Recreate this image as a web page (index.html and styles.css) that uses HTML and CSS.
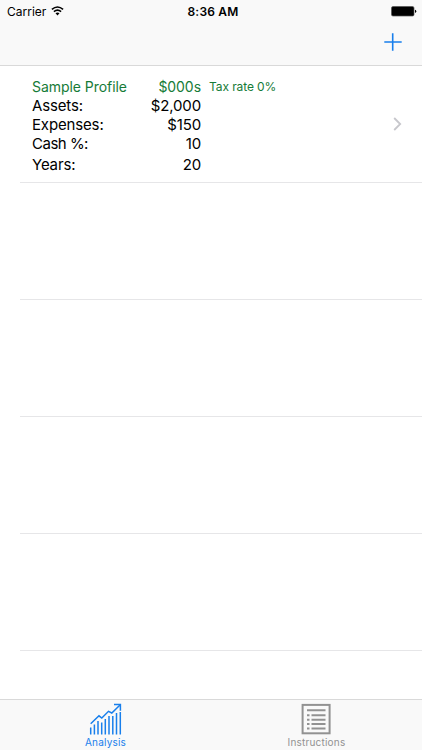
FILE: index.html
```html
<!DOCTYPE html>
<html>
<head>
  <meta charset="utf-8">
  <meta name="viewport" content="width=device-width, initial-scale=1">
  <title>Analysis</title>
  <link rel="stylesheet" href="styles.css">
</head>
<body>
  <header>
    <div class="status-bar">
      <div class="carrier">
        <span>Carrier</span>
        <svg width="13" height="10" viewBox="0 0 13 10">
          <path d="M0.9 3.4Q6.5 -1.4 12.1 3.4M2.9 5.6Q6.5 2.5 10.1 5.6" fill="none" stroke="#000" stroke-width="1.6"/>
          <path d="M4.5 7.3Q6.5 5.8 8.5 7.3L6.5 9.4Z"/>
        </svg>
      </div>
      <div class="time">8:36 AM</div>
      <div class="battery">
        <svg width="26" height="11" viewBox="0 0 26 11">
          <rect x="0.5" y="0.5" width="22.5" height="9.5" rx="1.5" stroke="#555" stroke-width="0.7"/>
          <path d="M24 3.7Q25.3 4 25.3 5.3Q25.3 6.6 24 6.9Z"/>
        </svg>
      </div>
    </div>
    <div class="nav-bar">
      <svg width="18" height="18" viewBox="0 0 18 18">
        <path d="M0.3 9H17.7M8.7 0.3V17.7" stroke="#187fec" stroke-width="1.6"/>
      </svg>
    </div>
  </header>

  <main>
    <div class="row">
      <div class="profile">
        <span class="name green">Sample Profile</span><span class="value name green">$000s</span><span class="tax green">Tax rate 0%</span>
        <span>Assets:</span><span class="value">$2,000</span><span></span>
        <span>Expenses:</span><span class="value">$150</span><span></span>
        <span class="cash">Cash %:</span><span class="value">10</span><span></span>
        <span>Years:</span><span class="value">20</span><span></span>
      </div>
      <svg class="chevron" width="9" height="14" viewBox="0 0 9 14">
        <path d="M1.2 1L7.2 7L1.2 13" fill="none" stroke="#c7c7cc" stroke-width="1.8"/>
      </svg>
    </div>
    <div class="row"></div>
    <div class="row"></div>
    <div class="row"></div>
    <div class="row"></div>
  </main>

  <footer>
    <div class="tab active">
      <svg width="33" height="32" viewBox="0 0 33 32">
        <g fill="none" stroke="currentColor" stroke-width="1.5">
          <path d="M1.7 31.5V24.5M5.4 31.5V21.5M9 31.5V18M12.7 31.5V19.5M16.3 31.5V16M20 31.5V13M23.8 31.5V13M27.5 31.5V10M31.3 31.5V9"/>
          <path d="M1.7 20.8L10 12.8L12.8 15L19.5 8.3L22.8 10L31 2"/>
          <path d="M25 1.4H31.4V7.8"/>
        </g>
      </svg>
      <span>Analysis</span>
    </div>
    <div class="tab">
      <svg width="31" height="32" viewBox="0 0 31 32">
        <rect x="1.6" y="1.9" width="27" height="28.4" fill="none" stroke="currentColor" stroke-width="2"/>
        <path d="M6 7.3H24.5M10.5 12.2H24.5M10.5 16.7H24.5M10.5 21H24.5M10.5 25.5H24.5M6 12.2H8.5M6 16.7H8.5M6 21H8.5M6 25.5H8.5" stroke="currentColor" stroke-width="2"/>
      </svg>
      <span>Instructions</span>
    </div>
  </footer>
</body>
</html>
```
FILE: styles.css
```css
* {
  box-sizing: border-box;
}
body {
  margin: 0;
  height: 750px;
  display: flex;
  flex-direction: column;
  overflow: hidden;
  background: #fff;
  color: #000;
  font-family: Inter, "Liberation Sans", sans-serif;
}
svg {
  display: block;
}
header {
  height: 66px;
  flex: none;
  background: #f9f9f9;
  border-bottom: 1px solid #d9d9d9;
}
.status-bar {
  height: 22px;
  display: grid;
  grid-template-columns: 1fr auto 1fr;
  align-items: center;
  padding: 0 5px 0 7px;
  font-size: 12px;
}
.carrier {
  display: flex;
  align-items: center;
  gap: 5px;
}
.time {
  font-weight: 600;
  letter-spacing: 0.2px;
  padding-left: 2px;
}
.battery {
  justify-self: end;
}
.nav-bar {
  display: flex;
  justify-content: flex-end;
  padding: 11px 20px 0 0;
}
main {
  flex: 1;
  min-height: 0;
  overflow: hidden;
}
.row {
  height: 117px;
  margin-left: 20px;
  border-bottom: 1px solid #e6e6e8;
  display: flex;
  align-items: center;
  justify-content: space-between;
}
.profile {
  display: grid;
  grid-template-columns: 104px 65px auto;
  grid-template-rows: 19px 20px 18px 20px 22px;
  align-items: center;
  padding: 4px 0 0 12px;
  font-size: 15px;
  letter-spacing: -0.15px;
}
.name {
  font-size: 14px;
  letter-spacing: -0.05px;
}
.value {
  text-align: right;
}
.cash {
  letter-spacing: -0.5px;
}
.tax {
  padding-left: 8px;
  font-size: 12px;
  letter-spacing: -0.1px;
}
.green {
  color: #167b37;
}
.chevron {
  margin-right: 20px;
}
footer {
  height: 51px;
  flex: none;
  display: flex;
  background: #f9f9f9;
  border-top: 1px solid #d9d9d9;
}
.tab {
  flex: 1;
  display: flex;
  flex-direction: column;
  align-items: center;
  padding-top: 3px;
  color: #929292;
  font-size: 10px;
  line-height: 15px;
  letter-spacing: 0.2px;
}
.active {
  color: #187fec;
}
```
